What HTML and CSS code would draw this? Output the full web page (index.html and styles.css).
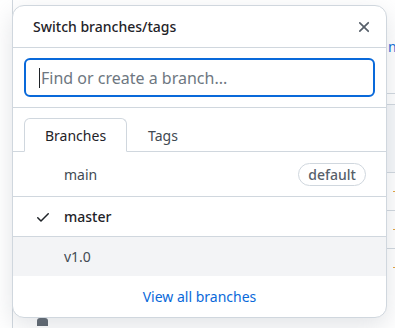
FILE: index.html
```html
<!DOCTYPE html>
<html lang="en">
<head>
  <meta charset="UTF-8" />
  <meta name="viewport" content="width=device-width, initial-scale=1.0"/>
  <title>Switch branches/tags</title>
  <link rel="stylesheet" href="styles.css">
</head>
<body>
  <!-- page behind the menu -->
  <div class="page">
    <div class="repo-box">
      <div class="repo-head"><a href="#" class="repo-link">ni</a></div>
      <div class="repo-strip"></div>
      <div class="repo-grey"></div>
      <div class="repo-row"><span class="dot"></span></div>
      <div class="repo-row"><span class="dot"></span></div>
      <div class="repo-row"><span class="dot"></span></div>
      <div class="repo-row last"><span class="file-icon"></span></div>
    </div>
  </div>

  <!-- branch menu -->
  <div class="branch-menu">
    <div class="menu-header">
      <span class="menu-title">Switch branches/tags</span>
      <button class="close-btn" aria-label="Close">
        <svg width="16" height="16" viewBox="0 0 16 16"><path d="M3.72 3.72a.75.75 0 0 1 1.06 0L8 6.94l3.220-3.22a.75.75 0 1 1 1.06 1.06L9.06 8l3.22 3.22a.75.75 0 1 1-1.06 1.06L8 9.06l-3.22 3.22a.75.75 0 0 1-1.06-1.06L6.94 8 3.72 4.78a.75.75 0 0 1 0-1.06Z"/></svg>
      </button>
    </div>
    <div class="menu-filter">
      <div class="filter-input"><span class="caret"></span><span class="placeholder">Find or create a branch...</span></div>
    </div>
    <div class="menu-tabs">
      <span class="tab selected">Branches</span>
      <span class="tab">Tags</span>
    </div>
    <div class="menu-list">
      <div class="menu-item first">
        <span class="check"></span>
        <span class="item-name">main</span>
        <span class="label">default</span>
      </div>
      <div class="menu-item">
        <span class="check">
          <svg width="16" height="16" viewBox="0 0 16 16"><path d="M13.78 4.22a.75.75 0 0 1 0 1.06l-7.25 7.25a.75.75 0 0 1-1.06 0L2.22 9.28a.75.75 0 0 1 1.06-1.06L6 10.94l6.72-6.72a.75.75 0 0 1 1.06 0Z"/></svg>
        </span>
        <span class="item-name bold">master</span>
      </div>
      <div class="menu-item hover">
        <span class="check"></span>
        <span class="item-name">v1.0</span>
      </div>
    </div>
    <div class="menu-footer">
      <a href="#">View all branches</a>
    </div>
  </div>
</body>
</html>
```

FILE: styles.css
```css
* {
  box-sizing: border-box;
  margin: 0;
  padding: 0;
}
body {
  font-family: 'Noto Sans', 'Liberation Sans', sans-serif;
  color: #1f2328;
  background: #ffffff;
  width: 395px;
  height: 328px;
  overflow: hidden;
}
.page {
  padding-left: 12px;
}
.repo-box {
  border-left: 1px solid #d0d7de;
  height: 328px;
}
.repo-head {
  height: 93px;
  display: flex;
  align-items: center;
  padding-left: 375px;
  white-space: nowrap;
}
.repo-link {
  color: #0969da;
  text-decoration: none;
  font-size: 14px;
}
.repo-strip {
  height: 12px;
  border-top: 1px solid #d0d7de;
  border-bottom: 1px solid #d0d7de;
}
.repo-grey {
  height: 67px;
  background: #f6f8fa;
}
.repo-row {
  height: 38px;
  border-top: 1px solid #d0d7de;
  display: flex;
  align-items: center;
  padding-left: 380px;
}
.dot {
  width: 2px;
  height: 1px;
  background: #e3a33b;
}
.repo-row.last {
  padding-left: 24px;
  align-items: flex-end;
  border-top: none;
}
.file-icon {
  width: 11px;
  height: 8px;
  background: #57606a;
  border-radius: 3px 3px 0 0;
  margin-bottom: -2px;
}

/* menu overlay */
.branch-menu {
  position: absolute;
  top: 5px;
  left: 12px;
  width: 375px;
  background: #ffffff;
  border: 1px solid #d0d7de;
  border-radius: 12px;
  box-shadow: 0 8px 24px rgba(140, 149, 159, 0.25);
  overflow: hidden;
}
.menu-header {
  height: 42px;
  display: flex;
  align-items: center;
  justify-content: space-between;
  padding: 0 10px 0 20px;
  border-bottom: 1px solid #d0d7de;
}
.menu-title {
  font-size: 14px;
  font-weight: 500;
}
.close-btn {
  border: none;
  background: none;
  width: 24px;
  height: 24px;
  display: flex;
  align-items: center;
  justify-content: center;
  fill: #57606a;
}
.close-btn svg {
  width: 18px;
  height: 18px;
}
.menu-filter {
  padding: 10px 11px;
  border-bottom: 1px solid #d0d7de;
}
.filter-input {
  height: 39px;
  border: 2px solid #0969da;
  border-radius: 6px;
  display: flex;
  align-items: center;
  padding-left: 13px;
}
.caret {
  width: 1px;
  height: 20px;
  background: #1f2328;
  margin-right: 1px;
}
.placeholder {
  font-size: 16px;
  color: #6e7781;
}
.menu-tabs {
  display: flex;
  padding: 10px 11px 0;
  border-bottom: 1px solid #d0d7de;
  height: 44px;
}
.tab {
  height: 34px;
  padding: 0 20px;
  display: flex;
  align-items: center;
  font-size: 14px;
  color: #424a53;
  border: 1px solid transparent;
  border-radius: 6px 6px 0 0;
}
.tab.selected {
  color: #1f2328;
  background: #ffffff;
  border-color: #d0d7de;
  border-bottom-color: #ffffff;
  margin-bottom: -1px;
}
.menu-item {
  height: 40px;
  display: flex;
  align-items: center;
  padding: 0 20px 0 22px;
  font-size: 14px;
  border-top: 1px solid #d0d7de;
}
.menu-item.first {
  height: 44px;
  border-top: none;
}
.menu-item.hover {
  background: #f3f4f6;
}
.check {
  width: 16px;
  height: 16px;
  margin-right: 13px;
  display: flex;
  fill: #1f2328;
}
.item-name {
  flex: 1;
  color: #424a53;
}
.item-name.bold {
  font-weight: 500;
  color: #1f2328;
}
.label {
  font-size: 14px;
  font-weight: 500;
  color: #57606a;
  border: 1px solid #d0d7de;
  border-radius: 12px;
  padding: 0 9px;
  height: 23px;
  display: flex;
  align-items: center;
}
.menu-footer {
  height: 41px;
  display: flex;
  align-items: center;
  justify-content: center;
}
.menu-footer a {
  color: #0969da;
  text-decoration: none;
  font-size: 14px;
}
```
